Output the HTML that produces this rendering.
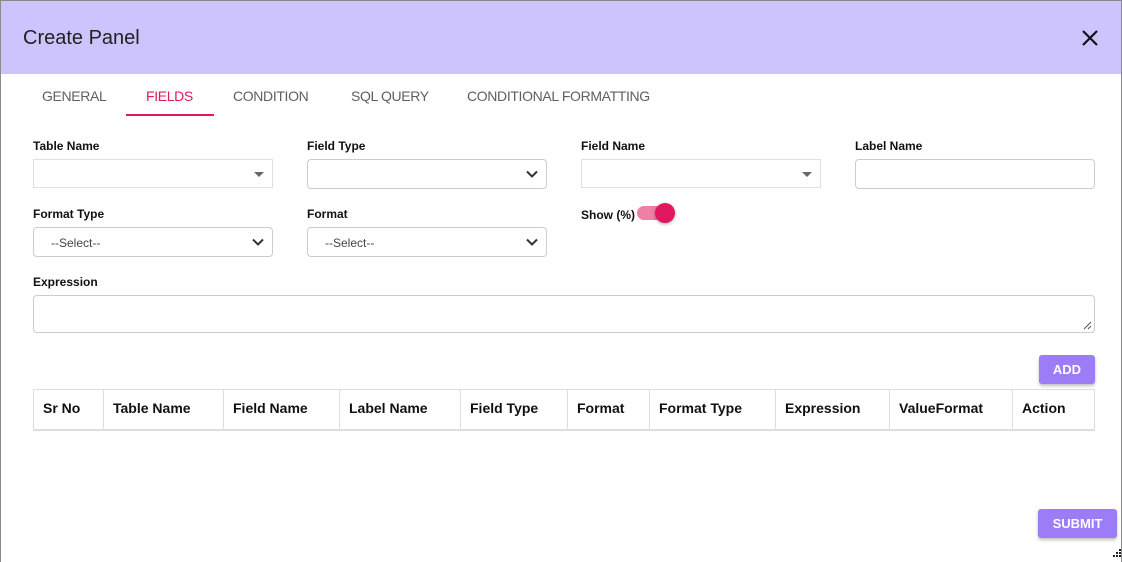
<!DOCTYPE html>
<html><head><meta charset="utf-8"><style>
*{box-sizing:border-box;margin:0;padding:0}
body{width:1122px;height:562px;background:#fff;font-family:"Liberation Sans",sans-serif;position:relative;overflow:hidden}
.frame{position:absolute;left:0;top:0;width:1122px;height:562px;border:1px solid #8a8a8a;border-bottom:none}
.hdr{position:absolute;left:1px;top:1px;width:1120px;height:73px;background:#cdc3fd}
.ttl{position:absolute;left:22px;top:26px;font-size:20px;color:#222}
.x{position:absolute;left:1080px;top:28px}
.tab{position:absolute;top:88px;font-size:14px;color:#5f5f5f;letter-spacing:-0.35px}
.ul{position:absolute;left:126px;top:114px;width:88px;height:2px;background:#e0195f}
.lbl{position:absolute;font-size:12px;font-weight:bold;color:#111}
.inp{position:absolute;width:240px;height:30px;border:1px solid #ccc;border-radius:4px;background:#fff}
.sq{border-radius:0;border-color:#e0e0e0}
.tri{position:absolute;right:8px;top:12px;width:0;height:0;border-left:5px solid transparent;border-right:5px solid transparent;border-top:5px solid #666}
.chev{position:absolute;right:8px;top:10px}
.sel{position:absolute;left:17px;top:8px;font-size:12px;color:#444}
table{position:absolute;left:33px;top:389px;width:1062px;border-collapse:collapse;font-size:14px}
td{height:40px;border:1px solid #ddd;border-bottom:2px solid #ddd;font-weight:bold;color:#111;padding-left:9px;padding-bottom:2px}
.btn{position:absolute;background:#9c7cf7;color:#fff;font-weight:bold;font-size:13px;text-align:center;border-radius:3px;box-shadow:0 2px 3px rgba(0,0,0,.25)}
</style></head><body>
<div class="frame"></div>
<div class="hdr"><div class="ttl">Create Panel</div>
<svg class="x" width="18" height="18" viewBox="0 0 18 18"><path d="M2 2L16 16M16 2L2 16" stroke="#111" stroke-width="2.2"/></svg></div>
<div class="tab" style="left:42px">GENERAL</div>
<div class="tab" style="left:146px;color:#e0195f">FIELDS</div>
<div class="tab" style="left:233px">CONDITION</div>
<div class="tab" style="left:351px">SQL QUERY</div>
<div class="tab" style="left:467px">CONDITIONAL FORMATTING</div>
<div class="ul"></div>

<div class="lbl" style="left:33px;top:139px">Table Name</div>
<div class="lbl" style="left:307px;top:139px">Field Type</div>
<div class="lbl" style="left:581px;top:139px">Field Name</div>
<div class="lbl" style="left:855px;top:139px">Label Name</div>
<div class="inp sq" style="left:33px;top:159px;height:29px"><div class="tri"></div></div>
<div class="inp" style="left:307px;top:159px"><svg class="chev" width="12" height="8" viewBox="0 0 12 8"><path d="M1 1.5L6 6.5L11 1.5" stroke="#333" stroke-width="2" fill="none"/></svg></div>
<div class="inp sq" style="left:581px;top:159px;height:29px"><div class="tri"></div></div>
<div class="inp" style="left:855px;top:159px"></div>

<div class="lbl" style="left:33px;top:207px">Format Type</div>
<div class="lbl" style="left:307px;top:207px">Format</div>
<div class="inp" style="left:33px;top:227px"><span class="sel">--Select--</span><svg class="chev" width="12" height="8" viewBox="0 0 12 8"><path d="M1 1.5L6 6.5L11 1.5" stroke="#333" stroke-width="2" fill="none"/></svg></div>
<div class="inp" style="left:307px;top:227px"><span class="sel">--Select--</span><svg class="chev" width="12" height="8" viewBox="0 0 12 8"><path d="M1 1.5L6 6.5L11 1.5" stroke="#333" stroke-width="2" fill="none"/></svg></div>
<div class="lbl" style="left:581px;top:208px">Show (%)</div>
<div style="position:absolute;left:637px;top:206px;width:34px;height:14px;border-radius:7px;background:#ef7fa3"></div>
<div style="position:absolute;left:655px;top:203px;width:20px;height:20px;border-radius:50%;background:#e0195f;box-shadow:0 1px 3px rgba(0,0,0,.35)"></div>

<div class="lbl" style="left:33px;top:275px">Expression</div>
<div class="inp" style="left:33px;top:295px;width:1062px;height:38px"><svg style="position:absolute;right:2px;bottom:2px" width="9" height="9" viewBox="0 0 9 9"><path d="M8 1L1 8M8 5L5 8" stroke="#555" stroke-width="1"/></svg></div>

<div class="btn" style="left:1039px;top:355px;width:56px;height:29px;line-height:29px">ADD</div>
<table><tr>
<td style="width:70px">Sr No</td><td style="width:120px">Table Name</td><td style="width:116px">Field Name</td><td style="width:121px">Label Name</td><td style="width:107px">Field Type</td><td style="width:82px">Format</td><td style="width:126px">Format Type</td><td style="width:114px">Expression</td><td style="width:123px">ValueFormat</td><td>Action</td>
</tr></table>
<div class="btn" style="left:1038px;top:509px;width:79px;height:29px;line-height:29px">SUBMIT</div>
<svg style="position:absolute;left:1110px;top:548px" width="12" height="12" viewBox="0 0 12 12"><g fill="#222"><rect x="9" y="1" width="2" height="2"/><rect x="6" y="4" width="2" height="2"/><rect x="9" y="4" width="2" height="2"/><rect x="3" y="7" width="2" height="2"/><rect x="6" y="7" width="2" height="2"/><rect x="9" y="7" width="2" height="2"/></g></svg>
</body></html>
